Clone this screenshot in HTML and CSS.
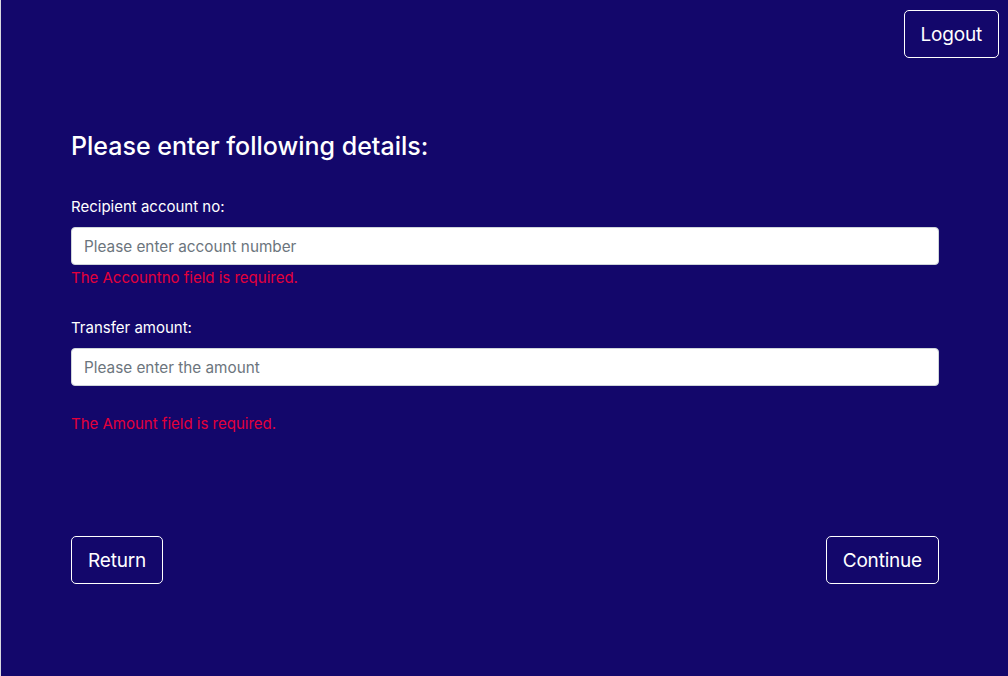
FILE: index.html
```html
<!DOCTYPE html>
<html>
<head>
<meta charset="utf-8">
<link rel="stylesheet" href="styles.css">
</head>
<body>
<div class="page">
  <header class="topbar">
    <button class="btn">Logout</button>
  </header>
  <main class="content">
    <h3 class="title">Please enter following details:</h3>
    <div class="field">
      <label class="label">Recipient account no:</label>
      <input class="input" type="text" placeholder="Please enter account number">
      <div class="error">The Accountno field is required.</div>
    </div>
    <div class="field field-2">
      <label class="label">Transfer amount:</label>
      <input class="input" type="text" placeholder="Please enter the amount">
      <div class="error error-gap">The Amount field is required.</div>
    </div>
    <div class="actions">
      <button class="btn">Return</button>
      <button class="btn">Continue</button>
    </div>
  </main>
</div>
</body>
</html>
```

FILE: styles.css
```css
html, body {
  margin: 0;
  padding: 0;
  height: 100%;
}
body {
  background: #d8d8e0;
  font-family: Inter, "Noto Sans", sans-serif;
}
.page {
  margin-left: 1px;
  height: 676px;
  background: #13076b;
  color: #ffffff;
  box-sizing: border-box;
}
.topbar {
  display: flex;
  justify-content: flex-end;
  padding: 10px 9px 0 0;
}
.btn {
  font-family: Inter, "Noto Sans", sans-serif;
  font-size: 19px;
  line-height: 30px;
  letter-spacing: -0.2px;
  padding: 9px 16px 7px;
  color: #ffffff;
  background: transparent;
  border: 1px solid #ffffff;
  border-radius: 5px;
  cursor: pointer;
}
.content {
  width: 868px;
  margin-left: 70px;
}
.title {
  margin: 71px 0 0 0;
  font-size: 25px;
  font-weight: 500;
  line-height: 34px;
}
.field {
  display: flex;
  flex-direction: column;
  margin-top: 32px;
}
.field-2 {
  margin-top: 26px;
}
.label {
  font-size: 15px;
  line-height: 24px;
  margin-bottom: 8px;
}
.input {
  height: 38px;
  box-sizing: border-box;
  border: 1px solid #ced4da;
  border-radius: 4px;
  padding: 6px 12px;
  font-family: Inter, "Noto Sans", sans-serif;
  font-size: 15.3px;
  background: #ffffff;
  color: #495057;
}
.input::placeholder {
  color: #6c757d;
}
.error {
  color: #e4003a;
  font-size: 15px;
  line-height: 24px;
  margin-top: 1px;
}
.error-gap {
  margin-top: 26px;
}
.actions {
  display: flex;
  justify-content: space-between;
  margin-top: 100px;
}
```
